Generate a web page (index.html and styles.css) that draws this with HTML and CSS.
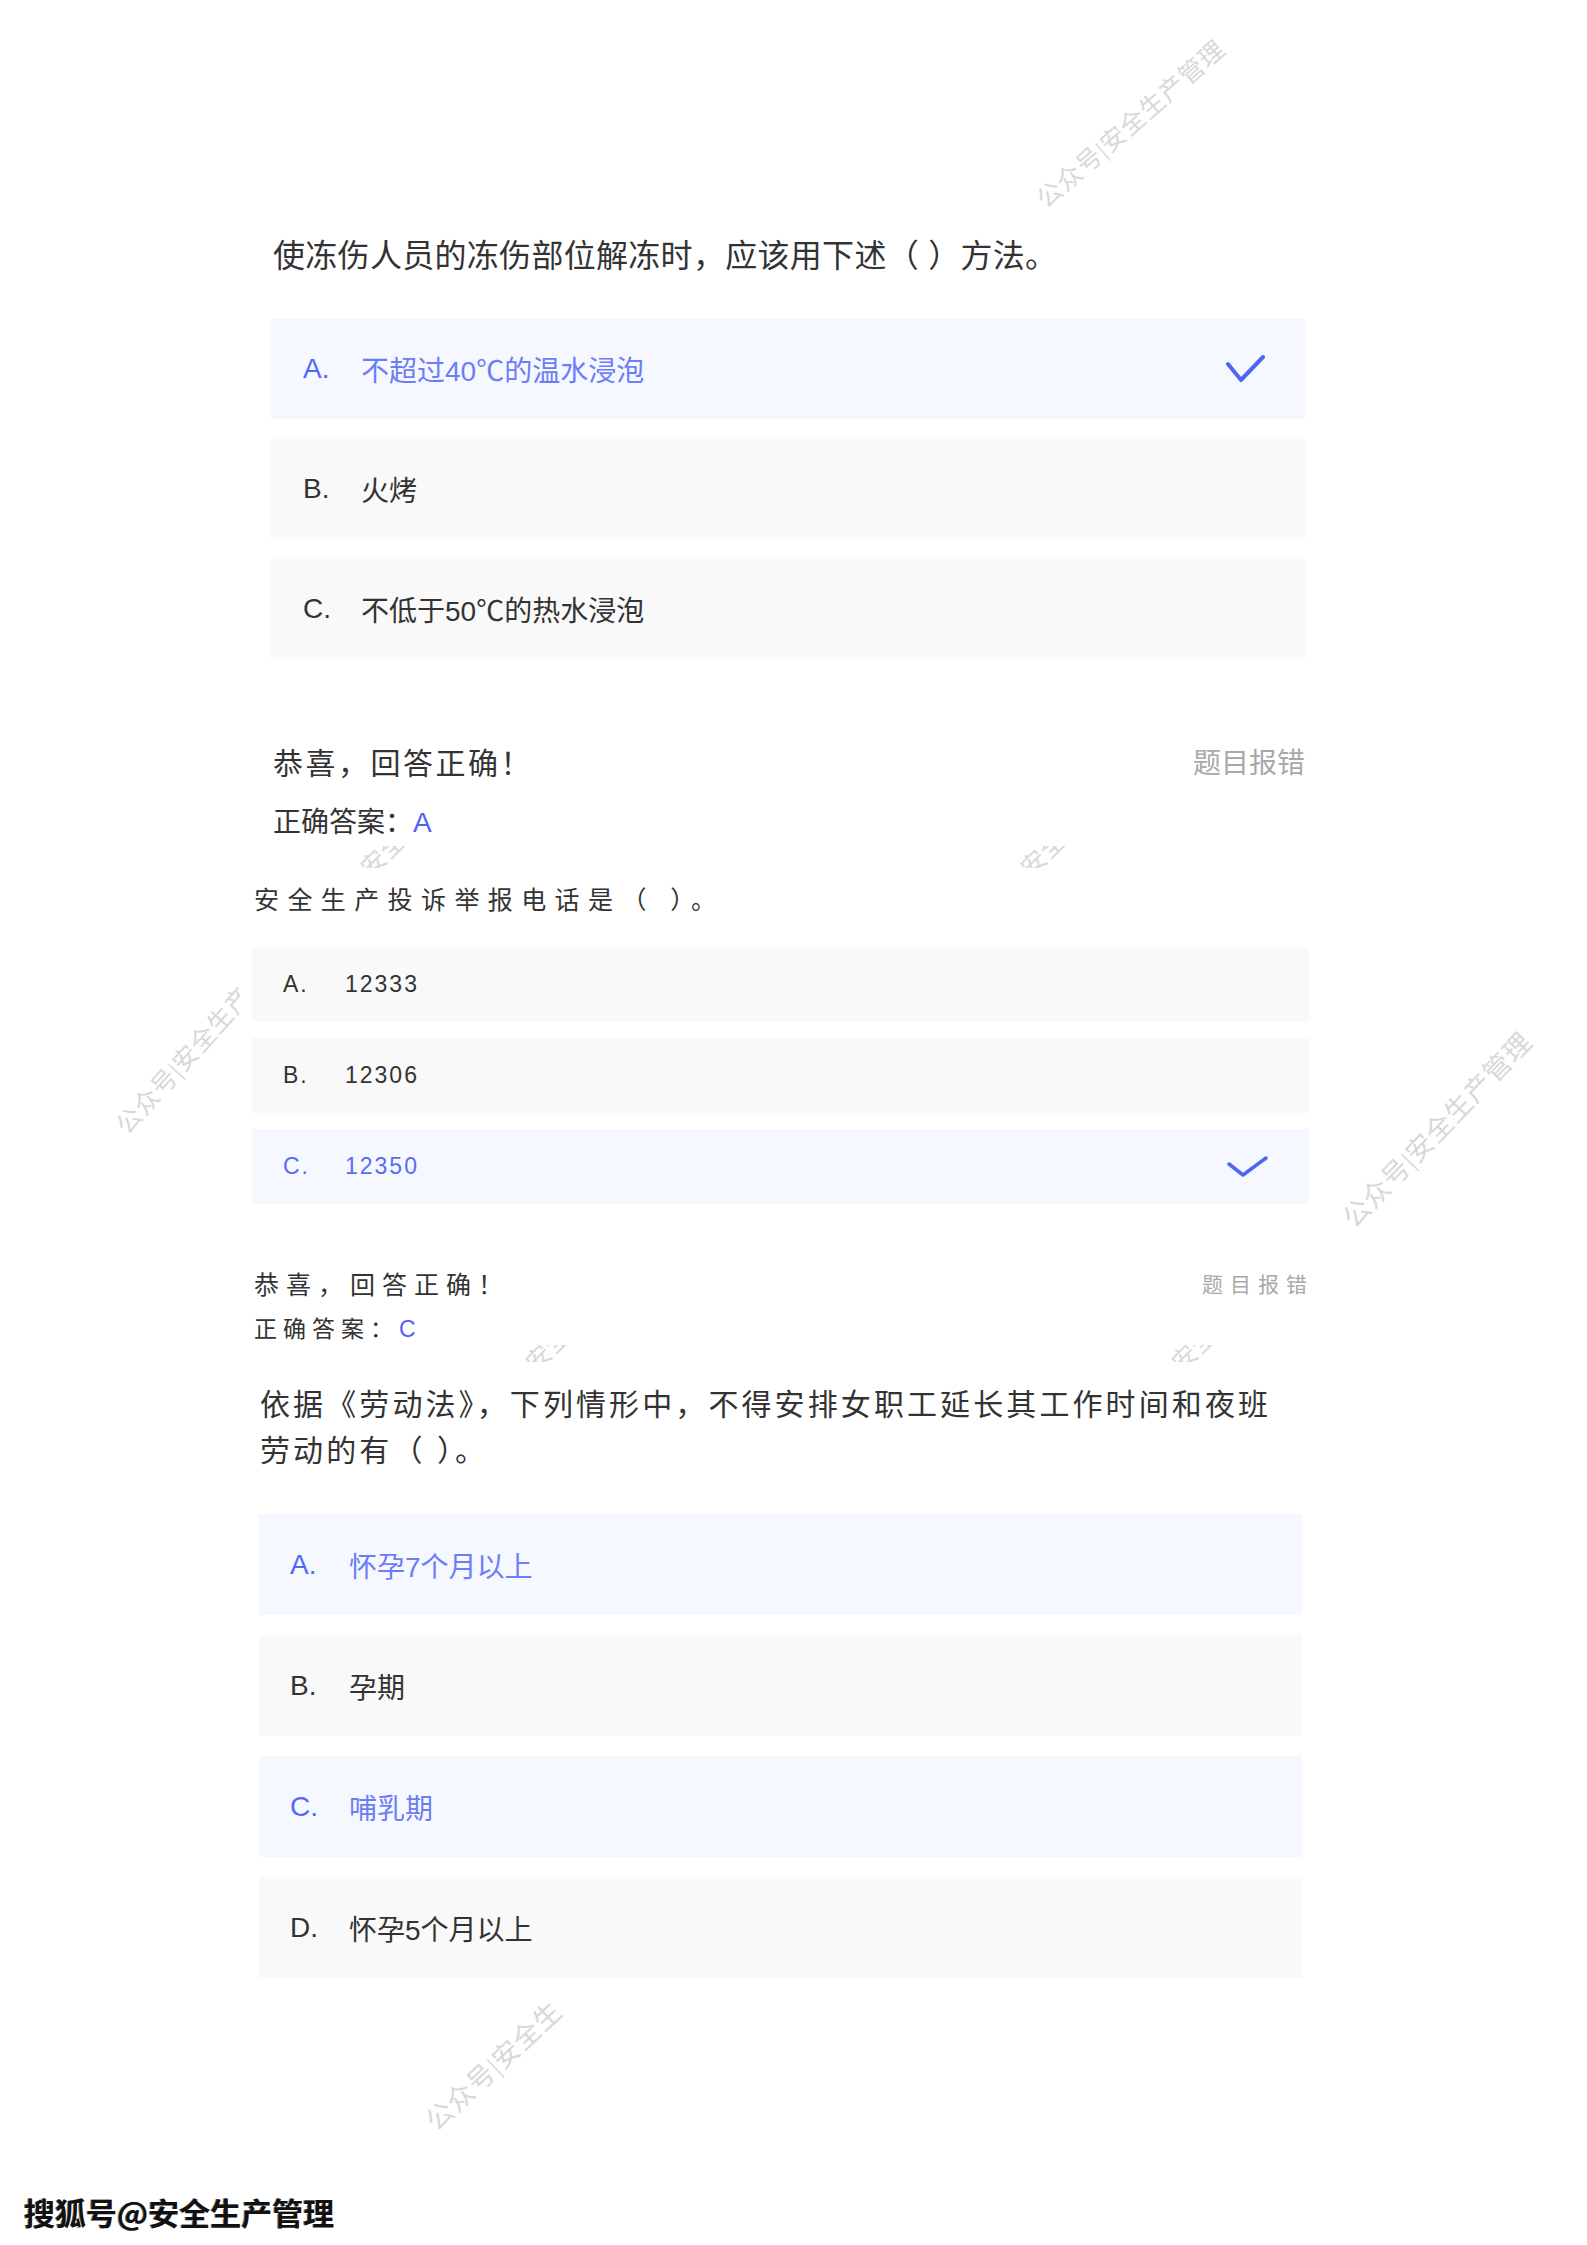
FILE: index.html
```html
<!DOCTYPE html>
<html lang="zh-CN">
<head>
<meta charset="utf-8">
<title>答题结果</title>
<link rel="stylesheet" href="styles.css">
</head>
<body>
  <div class="wm wm-top">公众号|安全生产管理</div>
  <div class="wm wm-left">公众号|安全生产管理</div>
  <div class="wm wm-right">公众号|安全生产管理</div>
  <div class="wm wm-bottom">公众号|安全生</div>
  <div class="wm wm-f1">公众号|安全生产管理</div>
  <div class="wm wm-f2">公众号|安全生产管理</div>
  <div class="wm wm-f3">公众号|安全生产管理</div>
  <div class="wm wm-f4">公众号|安全生产管理</div>

  <section class="sheet s1">
    <p class="q1-title">使冻伤人员的冻伤部位解冻时，应该用下述（ ）方法。</p>
    <div class="q1-opts">
      <div class="opt1 on"><span class="key">A.</span><span class="txt">不超过40<span class="cjk">℃</span>的温水浸泡</span>
        <svg class="tick1" width="40" height="28" viewBox="0 0 40 28"><polyline points="2,9 15,25 37,2" fill="none" stroke="#4f66f3" stroke-width="4" stroke-linecap="round" stroke-linejoin="round"/></svg>
      </div>
      <div class="opt1"><span class="key">B.</span><span class="txt">火烤</span></div>
      <div class="opt1"><span class="key">C.</span><span class="txt">不低于50<span class="cjk">℃</span>的热水浸泡</span></div>
    </div>
    <div class="r1-row"><span class="r1-ok">恭喜，回答正确！</span><span class="r1-report">题目报错</span></div>
    <div class="r1-ans">正确答案：<span class="blue">A</span></div>
  </section>

  <section class="sheet s2">
    <p class="q2-title">安全生产投诉举报电话是（ ）。</p>
    <div class="q2-opts">
      <div class="opt2"><span class="key">A.</span><span class="txt">12333</span></div>
      <div class="opt2"><span class="key">B.</span><span class="txt">12306</span></div>
      <div class="opt2 on"><span class="key">C.</span><span class="txt">12350</span>
        <svg class="tick2" width="41" height="21" viewBox="0 0 41 21"><polyline points="2,8 16,19 39,2" fill="none" stroke="#4f66f3" stroke-width="3.5" stroke-linecap="round" stroke-linejoin="round"/></svg>
      </div>
    </div>
    <div class="r2-row"><span class="r2-ok">恭喜，回答正确！</span><span class="r2-report">题目报错</span></div>
    <div class="r2-ans">正确答案：<span class="blue">C</span></div>
  </section>

  <section class="sheet s3">
    <p class="q3-title">依据《劳动法》，下列情形中，不得安排女职工延长其工作时间和夜班劳动的有（ ）。</p>
    <div class="q3-opts">
      <div class="opt3 on"><span class="key">A.</span><span class="txt">怀孕7个月以上</span></div>
      <div class="opt3"><span class="key">B.</span><span class="txt">孕期</span></div>
      <div class="opt3 on"><span class="key">C.</span><span class="txt">哺乳期</span></div>
      <div class="opt3"><span class="key">D.</span><span class="txt">怀孕5个月以上</span></div>
    </div>
  </section>

  <div class="stamp">搜狐号@安全生产管理</div>
</body>
</html>
```

FILE: styles.css
```css
html, body {
  margin: 0;
  padding: 0;
}
body {
  width: 1587px;
  height: 2245px;
  position: relative;
  overflow: hidden;
  background: #ffffff;
  font-family: "Liberation Sans", "Noto Sans CJK SC", sans-serif;
  color: #333333;
}
p { margin: 0; }
.cjk { font-family: "Noto Sans CJK SC", sans-serif; }

/* watermarks */
.wm {
  position: absolute;
  z-index: 0;
  white-space: nowrap;
  color: #d8d8d8;
  font-family: "Liberation Serif", "Noto Sans CJK SC", serif;
  font-size: 25px;
  line-height: 28px;
  letter-spacing: 1px;
  transform-origin: 0 100%;
}
.wm-top { left: 1050px; top: 186px; transform: rotate(-41deg); }
.wm-left { left: 132px; top: 1112px; transform: rotate(-48deg); }
.wm-right { left: 1358px; top: 1205px; font-size: 27px; transform: rotate(-46deg); }
.wm-bottom { left: 440px; top: 2108px; font-size: 27px; transform: rotate(-43deg); }
.wm-f1 { left: 316px; top: 914px; transform: rotate(-45deg); }
.wm-f2 { left: 976px; top: 914px; transform: rotate(-45deg); }
.wm-f3 { left: 481px; top: 1409px; transform: rotate(-45deg); }
.wm-f4 { left: 1127px; top: 1409px; transform: rotate(-45deg); }

/* sheets */
.sheet {
  position: relative;
  z-index: 1;
  background: #ffffff;
  margin-left: 240px;
  width: 1090px;
  box-sizing: border-box;
}
.s1 { margin-top: 210px; padding: 22px 25px 3px 31px; }
.s2 { margin-top: 22px; padding: 14px 21px 0 12px; }
.s3 { margin-top: 17px; padding: 20px 28px 12px 19px; }

.blue { color: #4d63f5; }

/* question 1 */
.q1-title {
  font-size: 32px;
  line-height: 48px;
  letter-spacing: 0.3px;
  padding-left: 2px;
  color: #333;
}
.q1-opts {
  margin-top: 39px;
  display: flex;
  flex-direction: column;
  gap: 20px;
}
.opt1 {
  height: 100px;
  display: flex;
  align-items: center;
  padding: 0 39px 0 32px;
  background: #f9f9f9;
  font-size: 28px;
  color: #333;
}
.opt1 .key { width: 58px; flex: none; }
.opt1 .txt { flex: 1; }
.opt1.on { background: #f5f8ff; }
.opt1.on .key { color: #5468f6; }
.opt1.on .txt { color: #6c7df6; }
.tick1 { display: block; flex: none; }

.r1-row {
  margin-top: 82px;
  height: 40px;
  display: flex;
  align-items: center;
  justify-content: space-between;
  padding-left: 2px;
}
.r1-ok { font-size: 30px; letter-spacing: 2.5px; color: #333; }
.r1-report { font-size: 28px; color: #a8a8a8; }
.r1-ans {
  margin-top: 22px;
  height: 40px;
  line-height: 40px;
  font-size: 28px;
  padding-left: 2px;
  color: #333;
}

/* question 2 */
.q2-title {
  font-size: 25px;
  line-height: 36px;
  letter-spacing: 8.4px;
  padding-left: 2px;
  color: #333;
}
.q2-opts {
  margin-top: 29px;
  display: flex;
  flex-direction: column;
  gap: 16px;
}
.opt2 {
  height: 75px;
  display: flex;
  align-items: center;
  padding: 0 41px 0 31px;
  background: #f9f9f9;
  font-size: 23px;
  letter-spacing: 2px;
  color: #333;
}
.opt2 .key { width: 62px; flex: none; }
.opt2 .txt { flex: 1; }
.opt2.on { background: #f5f8ff; color: #5b6bf2; }
.tick2 { display: block; flex: none; }

.r2-row {
  margin-top: 61px;
  height: 36px;
  display: flex;
  align-items: center;
  justify-content: space-between;
  padding-left: 2px;
}
.r2-ok { font-size: 25px; letter-spacing: 7px; color: #333; }
.r2-report { font-size: 21px; letter-spacing: 7px; color: #a8a8a8; margin-right: -5px; }
.r2-ans {
  margin-top: 12px;
  height: 32px;
  line-height: 32px;
  font-size: 23px;
  letter-spacing: 6px;
  padding-left: 2px;
  color: #333;
}

/* question 3 */
.q3-title {
  font-size: 30px;
  line-height: 46px;
  letter-spacing: 3.1px;
  color: #333;
  max-width: 1030px;
  padding-left: 1px;
}
.q3-opts {
  margin-top: 40px;
  display: flex;
  flex-direction: column;
  gap: 20px;
}
.opt3 {
  height: 101px;
  display: flex;
  align-items: center;
  padding: 0 31px;
  background: #f9f9f9;
  font-size: 28px;
  color: #333;
}
.opt3 .key { width: 59px; flex: none; }
.opt3.on { background: #f5f8ff; }
.opt3.on .key { color: #5468f6; }
.opt3.on .txt { color: #6c7df6; }

/* footer stamp */
.stamp {
  position: absolute;
  z-index: 2;
  left: 24px;
  top: 2190px;
  font-family: "Noto Sans CJK SC", sans-serif;
  font-weight: 700;
  font-size: 31px;
  line-height: 44px;
  color: #111;
  text-shadow: 1px 1px 0 #fff, -1px 0 0 #777;
}
```
